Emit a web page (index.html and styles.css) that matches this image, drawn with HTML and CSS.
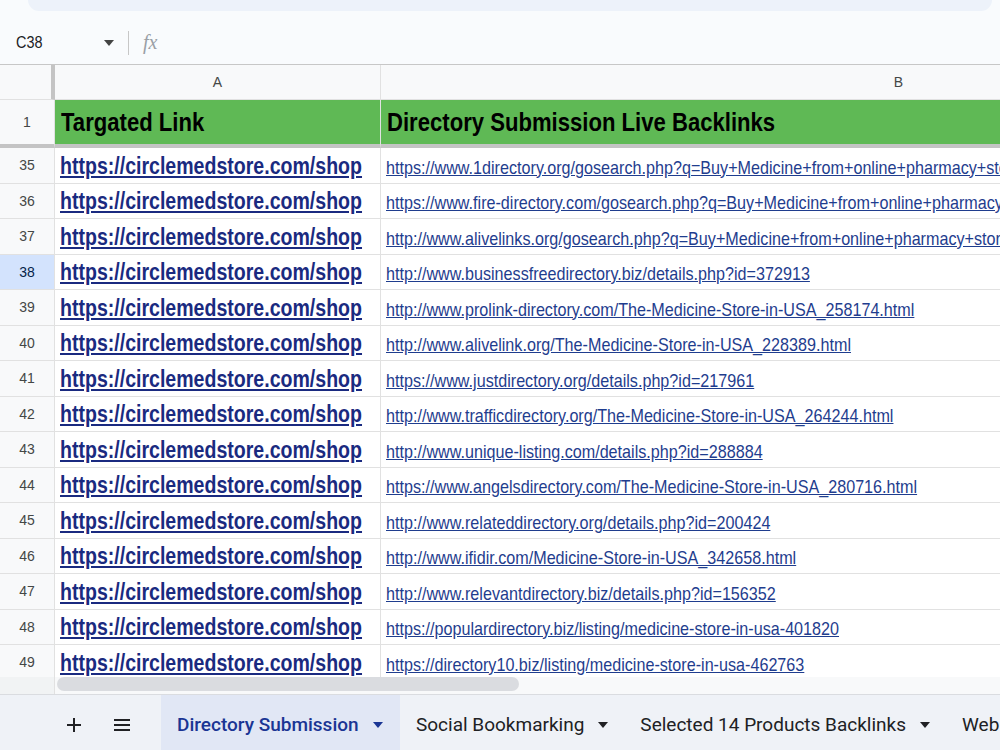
FILE: index.html
```html
<!DOCTYPE html>
<html lang="en">
<head>
  <meta charset="UTF-8" />
  <title>Directory Submission - Sheet</title>
  <link rel="stylesheet" href="styles.css">
</head>
<body>
  <div class="toolbar-edge"><div class="toolbar-pill"></div></div>

  <div class="formula-bar">
    <div class="name-box">
      <span class="sq">C38</span>
      <svg class="caret" width="10" height="6" viewBox="0 0 10 6"><path d="M0 0h10L5 6z" fill="#444"/></svg>
    </div>
    <div class="fb-sep"></div>
    <span class="fx">fx</span>
  </div>

  <div class="grid-wrap">
    <div class="grid">
      <div class="corner"></div>
      <div class="col-head">A</div>
      <div class="col-head">B</div>

      <div class="row-head freeze">1</div>
      <div class="title freeze"><span class="sq">Targated Link</span></div>
      <div class="title freeze"><span class="sq">Directory Submission Live Backlinks</span></div>

      <div class="row-head">35</div>
      <div class="cell"><a class="target sq" href="#">https://circlemedstore.com/shop</a></div>
      <div class="cell"><a class="live sq" href="#">https://www.1directory.org/gosearch.php?q=Buy+Medicine+from+online+pharmacy+store+in+USA</a></div>

      <div class="row-head">36</div>
      <div class="cell"><a class="target sq" href="#">https://circlemedstore.com/shop</a></div>
      <div class="cell"><a class="live sq" href="#">https://www.fire-directory.com/gosearch.php?q=Buy+Medicine+from+online+pharmacy+store+in+USA</a></div>

      <div class="row-head">37</div>
      <div class="cell"><a class="target sq" href="#">https://circlemedstore.com/shop</a></div>
      <div class="cell"><a class="live sq" href="#">http://www.alivelinks.org/gosearch.php?q=Buy+Medicine+from+online+pharmacy+store+in+USA</a></div>

      <div class="row-head active">38</div>
      <div class="cell"><a class="target sq" href="#">https://circlemedstore.com/shop</a></div>
      <div class="cell"><a class="live sq" href="#">http://www.businessfreedirectory.biz/details.php?id=372913</a></div>

      <div class="row-head">39</div>
      <div class="cell"><a class="target sq" href="#">https://circlemedstore.com/shop</a></div>
      <div class="cell"><a class="live sq" href="#">http://www.prolink-directory.com/The-Medicine-Store-in-USA_258174.html</a></div>

      <div class="row-head">40</div>
      <div class="cell"><a class="target sq" href="#">https://circlemedstore.com/shop</a></div>
      <div class="cell"><a class="live sq" href="#">http://www.alivelink.org/The-Medicine-Store-in-USA_228389.html</a></div>

      <div class="row-head">41</div>
      <div class="cell"><a class="target sq" href="#">https://circlemedstore.com/shop</a></div>
      <div class="cell"><a class="live sq" href="#">https://www.justdirectory.org/details.php?id=217961</a></div>

      <div class="row-head">42</div>
      <div class="cell"><a class="target sq" href="#">https://circlemedstore.com/shop</a></div>
      <div class="cell"><a class="live sq" href="#">http://www.trafficdirectory.org/The-Medicine-Store-in-USA_264244.html</a></div>

      <div class="row-head">43</div>
      <div class="cell"><a class="target sq" href="#">https://circlemedstore.com/shop</a></div>
      <div class="cell"><a class="live sq" href="#">http://www.unique-listing.com/details.php?id=288884</a></div>

      <div class="row-head">44</div>
      <div class="cell"><a class="target sq" href="#">https://circlemedstore.com/shop</a></div>
      <div class="cell"><a class="live sq" href="#">https://www.angelsdirectory.com/The-Medicine-Store-in-USA_280716.html</a></div>

      <div class="row-head">45</div>
      <div class="cell"><a class="target sq" href="#">https://circlemedstore.com/shop</a></div>
      <div class="cell"><a class="live sq" href="#">http://www.relateddirectory.org/details.php?id=200424</a></div>

      <div class="row-head">46</div>
      <div class="cell"><a class="target sq" href="#">https://circlemedstore.com/shop</a></div>
      <div class="cell"><a class="live sq" href="#">http://www.ifidir.com/Medicine-Store-in-USA_342658.html</a></div>

      <div class="row-head">47</div>
      <div class="cell"><a class="target sq" href="#">https://circlemedstore.com/shop</a></div>
      <div class="cell"><a class="live sq" href="#">http://www.relevantdirectory.biz/details.php?id=156352</a></div>

      <div class="row-head">48</div>
      <div class="cell"><a class="target sq" href="#">https://circlemedstore.com/shop</a></div>
      <div class="cell"><a class="live sq" href="#">https://populardirectory.biz/listing/medicine-store-in-usa-401820</a></div>

      <div class="row-head">49</div>
      <div class="cell"><a class="target sq" href="#">https://circlemedstore.com/shop</a></div>
      <div class="cell"><a class="live sq" href="#">https://directory10.biz/listing/medicine-store-in-usa-462763</a></div>
    </div>
  </div>

  <div class="scroll-strip">
    <div class="scroll-corner"></div>
    <div class="scroll-track"><div class="scroll-thumb"></div></div>
  </div>

  <div class="tab-bar">
    <div class="tab-tools">
      <svg width="16" height="16" viewBox="0 0 16 16"><path d="M8 1v14M1 8h14" stroke="#202124" stroke-width="2"/></svg>
      <svg width="16" height="14" viewBox="0 0 16 14"><path d="M0 2h16M0 7h16M0 12h16" stroke="#202124" stroke-width="2"/></svg>
    </div>
    <div class="tab current">Directory Submission <svg width="10" height="6" viewBox="0 0 10 6"><path d="M0 0h10L5 6z" fill="#1a3594"/></svg></div>
    <div class="tab">Social Bookmarking <svg width="10" height="6" viewBox="0 0 10 6"><path d="M0 0h10L5 6z" fill="#202124"/></svg></div>
    <div class="tab">Selected 14 Products Backlinks <svg width="10" height="6" viewBox="0 0 10 6"><path d="M0 0h10L5 6z" fill="#202124"/></svg></div>
    <div class="tab">Web 2.0 Backlinks</div>
  </div>
</body>
</html>
```

FILE: styles.css
```css
* { box-sizing: border-box; margin: 0; padding: 0; }
body {
  width: 1000px;
  height: 750px;
  overflow: hidden;
  background: #f9fbfd;
  font-family: "Liberation Sans", Arial, sans-serif;
  display: flex;
  flex-direction: column;
}
.sq {
  display: inline-block;
  transform: scaleX(0.85);
  transform-origin: 0 50%;
  white-space: nowrap;
}

/* toolbar + formula bar */
.toolbar-edge { height: 11px; padding: 0 8px 0 28px; }
.toolbar-pill {
  height: 100%;
  background: #edf2fa;
  border-radius: 0 0 22px 22px;
}
.formula-bar {
  height: 54px;
  padding-top: 10px;
  display: flex;
  align-items: center;
  border-bottom: 1px solid #c7c7c7;
}
.name-box {
  width: 128px;
  padding: 0 14px 0 16px;
  display: flex;
  align-items: center;
  justify-content: space-between;
  font-size: 17px;
  color: #202124;
}
.fb-sep { width: 1px; height: 24px; background: #c7c7c7; }
.fx {
  margin-left: 14px;
  font-family: "Liberation Serif", serif;
  font-style: italic;
  font-size: 20px;
  color: #9aa0a6;
}

/* grid */
.grid-wrap { height: 612px; overflow: hidden; background: #fff; }
.grid {
  display: grid;
  grid-template-columns: 55px 326px 1036px;
  grid-template-rows: 35px 48px repeat(15, 35.5px);
}
.grid > div {
  border-right: 1px solid #e1e1e1;
  border-bottom: 1px solid #e1e1e1;
  white-space: nowrap;
  overflow: hidden;
}
.corner { background: #f8f9fa; border-right: 4px solid #c4c4c4 !important; }
.col-head {
  background: #f8f9fa;
  display: flex;
  align-items: center;
  justify-content: center;
  font-size: 14px;
  color: #444746;
}
.row-head {
  background: #f8f9fa;
  display: flex;
  align-items: center;
  justify-content: center;
  font-size: 14px;
  color: #444746;
}
.row-head.active { background: #d3e3fd; color: #041e49; }
.freeze { border-bottom: 4px solid #c4c4c4 !important; }
.title {
  background: #5fb955;
  display: flex;
  align-items: center;
  padding-left: 6px;
  font-size: 26px;
  font-weight: bold;
  color: #000;
}
.cell {
  display: flex;
  align-items: flex-end;
  padding: 0 0 3px 5px;
}
.target {
  font-size: 23px;
  font-weight: bold;
  color: #1a2a80;
}
.live {
  font-size: 19px;
  color: #1f3d8e;
  padding-bottom: 1px;
}

/* horizontal scrollbar */
.scroll-strip { height: 17px; display: flex; }
.scroll-corner { width: 55px; background: #f1f3f4; border-right: 1px solid #e1e1e1; }
.scroll-track { flex: 1; background: #f8f9fa; padding: 0 2px 2px; }
.scroll-thumb {
  width: 462px;
  height: 14px;
  background: #dadce0;
  border-radius: 7px;
}

/* sheet tabs */
.tab-bar {
  flex: 1;
  display: flex;
  align-items: stretch;
  border-top: 1px solid #dadce0;
  background: #eff2f7;
  font-family: Roboto, "Noto Sans", sans-serif;
  white-space: nowrap;
}
.tab-tools {
  flex-shrink: 0;
  width: 161px;
  display: flex;
  align-items: center;
  gap: 32px;
  padding: 4px 0 0 66px;
}
.tab {
  flex-shrink: 0;
  display: flex;
  align-items: center;
  gap: 14px;
  padding: 4px 16px 0;
  font-size: 19px;
  color: #202124;
}
.tab.current {
  width: 239px;
  background: #e1e7f5;
  color: #1a3594;
  font-weight: 500;
}
```
